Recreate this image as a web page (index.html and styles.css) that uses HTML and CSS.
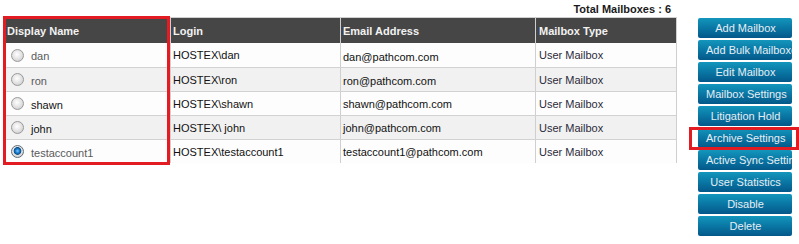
FILE: index.html
```html
<!DOCTYPE html>
<html>
<head>
<meta charset="utf-8">
<link rel="stylesheet" href="styles.css">
</head>
<body>
<div class="page">
  <div class="main">
    <div class="total">Total Mailboxes : 6</div>
    <div class="grid">
      <div class="row head">
        <div class="cell c1">Display Name</div>
        <div class="cell c2">Login</div>
        <div class="cell c3">Email Address</div>
        <div class="cell c4">Mailbox Type</div>
      </div>
      <div class="row odd first">
        <div class="cell c1"><span class="radio"></span><span class="name muted">dan</span></div>
        <div class="cell c2">HOSTEX\dan</div>
        <div class="cell c3 low">dan@pathcom.com</div>
        <div class="cell c4 type">User Mailbox</div>
      </div>
      <div class="row even">
        <div class="cell c1"><span class="radio"></span><span class="name muted">ron</span></div>
        <div class="cell c2">HOSTEX\ron</div>
        <div class="cell c3 low">ron@pathcom.com</div>
        <div class="cell c4 type">User Mailbox</div>
      </div>
      <div class="row odd">
        <div class="cell c1"><span class="radio"></span><span class="name">shawn</span></div>
        <div class="cell c2">HOSTEX\shawn</div>
        <div class="cell c3">shawn@pathcom.com</div>
        <div class="cell c4 type">User Mailbox</div>
      </div>
      <div class="row even">
        <div class="cell c1"><span class="radio"></span><span class="name">john</span></div>
        <div class="cell c2">HOSTEX\ john</div>
        <div class="cell c3">john@pathcom.com</div>
        <div class="cell c4 type">User Mailbox</div>
      </div>
      <div class="row odd">
        <div class="cell c1"><span class="radio checked"></span><span class="name muted">testaccount1</span></div>
        <div class="cell c2">HOSTEX\testaccount1</div>
        <div class="cell c3">testaccount1@pathcom.com</div>
        <div class="cell c4 type">User Mailbox</div>
      </div>
      <div class="highlight col-box"></div>
    </div>
  </div>
  <div class="actions">
    <div class="btn">Add Mailbox</div>
    <div class="btn">Add Bulk Mailboxes</div>
    <div class="btn">Edit Mailbox</div>
    <div class="btn">Mailbox Settings</div>
    <div class="btn">Litigation Hold</div>
    <div class="btn">Archive Settings</div>
    <div class="btn">Active Sync Settings</div>
    <div class="btn">User Statistics</div>
    <div class="btn">Disable</div>
    <div class="btn">Delete</div>
    <div class="highlight btn-box"></div>
  </div>
</div>
</body>
</html>
```

FILE: styles.css
```css
* { box-sizing: border-box; }
html, body { margin: 0; padding: 0; background: #fff; }
body {
  font-family: "Liberation Sans", Arial, sans-serif;
  font-size: 11px;
  color: #111;
}
.page {
  display: flex;
  align-items: flex-start;
  width: 799px;
  height: 244px;
  overflow: hidden;
}
.main {
  width: 677px;
  padding-left: 4px;
}
.total {
  height: 17px;
  line-height: 17px;
  text-align: right;
  font-weight: bold;
  color: #1a1a1a;
  padding-right: 6px;
  padding-top: 1px;
}
.grid {
  position: relative;
  width: 673px;
  border-top: 1px solid #cfcfcf;
  border-left: 1px solid #cfcfcf;
  border-right: 1px solid #cfcfcf;
}
.row {
  display: grid;
  grid-template-columns: 165px 170px 195px 141px;
  height: 24px;
  border-top: 1px solid #d2d2d2;
}
.row.first { border-top: 0; }
.row.head {
  height: 25px;
  border-top: 0;
  background: #464646;
  color: #f2f2f2;
  font-weight: bold;
}
.row.odd { background: #fdfdfd; }
.row.even { background: #f1f1f1; }
.cell {
  display: flex;
  align-items: center;
  padding-left: 2px;
  white-space: nowrap;
  overflow: hidden;
}
.cell.c2, .cell.c3, .cell.c4 { border-left: 1px solid #cfcfcf; }
.cell.c4 { padding-left: 3px; }
.head .cell.c1 { padding-left: 2px; padding-top: 1px; }
.head .cell { padding-top: 1px; }
.cell.low { padding-top: 3px; }
.cell.type { color: #2b2b3a; }
.row:not(.head) .cell.c1 { padding-left: 6px; }
.row:not(.head) .cell.c1 .name { padding-top: 2px; }
.name { margin-left: 7px; }
.muted { color: #5a5a5a; }
.radio {
  display: inline-block;
  width: 13px;
  height: 13px;
  border-radius: 50%;
  border: 1px solid #9a9a9a;
  background: radial-gradient(circle at 45% 40%, #ffffff 0, #e6e6e6 45%, #c4c4c4 100%);
  flex: none;
}
.radio.checked {
  border-color: #5f6f7c;
  background:
    radial-gradient(circle at 50% 45%, #7fc6ff 0, #1b7fcf 2px, #0b4d86 3.5px, rgba(0,0,0,0) 4.2px),
    radial-gradient(circle at 45% 40%, #ffffff 0, #e6e6e6 45%, #c4c4c4 100%);
}
.highlight {
  position: absolute;
  border: 3px solid #e31b23;
  pointer-events: none;
}
.col-box {
  left: -2px;
  top: -2px;
  width: 167px;
  height: 149px;
}
.actions {
  position: relative;
  margin-left: 21px;
  margin-top: 18px;
  width: 94px;
  display: flex;
  flex-direction: column;
  gap: 2px;
}
.btn {
  height: 20px;
  line-height: 20px;
  padding: 0 7px 0 8px;
  text-align: center;
  white-space: nowrap;
  overflow: hidden;
  color: #e6eef4;
  border-radius: 2px;
  background: linear-gradient(to bottom, #1396bd 0%, #0a7aa6 45%, #04588a 100%);
}
.btn-box {
  left: -9px;
  top: 109px;
  width: 110px;
  height: 23px;
}
```
